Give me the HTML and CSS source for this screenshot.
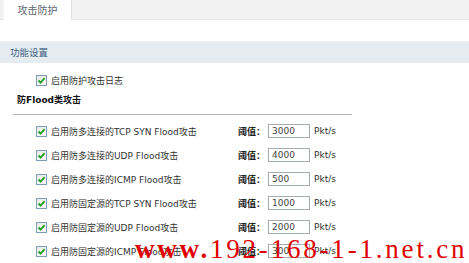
FILE: index.html
```html
<!DOCTYPE html>
<html lang="zh-CN">
<head>
  <meta charset="UTF-8">
  <title>攻击防护</title>
  <link rel="stylesheet" href="styles.css">
</head>
<body>

  <!-- Tabs -->
  <div class="tabs">
    <div class="tab active">攻击防护</div>
  </div>

  <!-- Panel -->
  <div class="panel">
    <div class="section-title">功能设置</div>

    <div class="option">
      <span class="check"><svg viewBox="0 0 9 9"><path d="M1.5 4.5 L3.6 6.6 L7.6 2.2" /></svg></span>
      <span>启用防护攻击日志</span>
    </div>

    <div class="subtitle">防Flood类攻击</div>
    <div class="divider"></div>

    <div class="row">
      <span class="check"><svg viewBox="0 0 9 9"><path d="M1.5 4.5 L3.6 6.6 L7.6 2.2" /></svg></span>
      <span class="label">启用防多连接的TCP SYN Flood攻击</span>
      <span class="thresh">阈值：</span>
      <input class="value" type="text" value="3000">
      <span class="unit">Pkt/s</span>
    </div>
    <div class="row">
      <span class="check"><svg viewBox="0 0 9 9"><path d="M1.5 4.5 L3.6 6.6 L7.6 2.2" /></svg></span>
      <span class="label">启用防多连接的UDP Flood攻击</span>
      <span class="thresh">阈值：</span>
      <input class="value" type="text" value="4000">
      <span class="unit">Pkt/s</span>
    </div>
    <div class="row">
      <span class="check"><svg viewBox="0 0 9 9"><path d="M1.5 4.5 L3.6 6.6 L7.6 2.2" /></svg></span>
      <span class="label">启用防多连接的ICMP Flood攻击</span>
      <span class="thresh">阈值：</span>
      <input class="value" type="text" value="500">
      <span class="unit">Pkt/s</span>
    </div>
    <div class="row">
      <span class="check"><svg viewBox="0 0 9 9"><path d="M1.5 4.5 L3.6 6.6 L7.6 2.2" /></svg></span>
      <span class="label">启用防固定源的TCP SYN Flood攻击</span>
      <span class="thresh">阈值：</span>
      <input class="value" type="text" value="1000">
      <span class="unit">Pkt/s</span>
    </div>
    <div class="row">
      <span class="check"><svg viewBox="0 0 9 9"><path d="M1.5 4.5 L3.6 6.6 L7.6 2.2" /></svg></span>
      <span class="label">启用防固定源的UDP Flood攻击</span>
      <span class="thresh">阈值：</span>
      <input class="value" type="text" value="2000">
      <span class="unit">Pkt/s</span>
    </div>
    <div class="row">
      <span class="check"><svg viewBox="0 0 9 9"><path d="M1.5 4.5 L3.6 6.6 L7.6 2.2" /></svg></span>
      <span class="label">启用防固定源的ICMP Flood攻击</span>
      <span class="thresh">阈值：</span>
      <input class="value" type="text" value="300">
      <span class="unit">Pkt/s</span>
    </div>
  </div>

  <!-- Watermark -->
  <div class="watermark"><b>www.</b>192-168-1-1.net.cn</div>

</body>
</html>
```

FILE: styles.css
```css
body {
  margin: 0;
  font-family: "DejaVu Sans", "Noto Sans CJK SC", sans-serif;
  font-size: 9px;
  color: #333;
  background-color: #fff;
  overflow: hidden;
}

.tabs {
  height: 19px;
  background-color: #f2f2f2;
  border-bottom: 1px solid #e6e6e6;
  display: flex;
}

.tab {
  margin-left: 3px;
  width: 67px;
  height: 20px;
  line-height: 21px;
  text-align: center;
  font-size: 10px;
  color: #5b6670;
}

.tab.active {
  background-color: #fff;
  border-right: 1px solid #e2e2e2;
  border-left: 1px solid #f6f6f6;
}

.panel {
  margin-top: 21px;
}

.section-title {
  height: 21px;
  line-height: 22px;
  padding-left: 10px;
  background-color: #e4ecf2;
  border-top: 1px solid #eaf3f8;
  color: #3f6080;
  font-size: 9.5px;
}

.option {
  display: flex;
  align-items: center;
  height: 24px;
  margin-top: 5px;
  padding-left: 36px;
}

.check {
  width: 9px;
  height: 9px;
  border: 1px solid #7f9db9;
  background: linear-gradient(135deg, #e8e8e0, #fff);
  margin-right: 4px;
  display: flex;
  flex-shrink: 0;
}

.check svg {
  width: 9px;
  height: 9px;
}

.check path {
  fill: none;
  stroke: #21a121;
  stroke-width: 1.8;
}

.subtitle {
  height: 16px;
  line-height: 16px;
  padding-left: 17px;
  font-weight: bold;
  color: #111;
}

.divider {
  width: 339px;
  margin: 6px 0 0 13px;
  border-top: 1px solid #b4b4b4;
}

.row {
  display: flex;
  align-items: center;
  height: 24px;
  padding-left: 36px;
}

.divider + .row {
  margin-top: 4px;
}

.label {
  width: 187px;
}

.thresh {
  width: 30px;
  font-weight: bold;
  color: #222;
}

.value {
  width: 37px;
  height: 12px;
  padding: 0 0 0 3px;
  margin: 0 4px 0 0;
  border: 1px solid #a5acb2;
  font-family: "DejaVu Sans", sans-serif;
  font-size: 9px;
  color: #444;
}

.watermark {
  position: absolute;
  left: 135px;
  top: 236px;
  font-family: "Liberation Serif", serif;
  font-size: 27px;
  line-height: 27px;
  letter-spacing: 2.8px;
  color: #e00000;
  white-space: nowrap;
}
```
